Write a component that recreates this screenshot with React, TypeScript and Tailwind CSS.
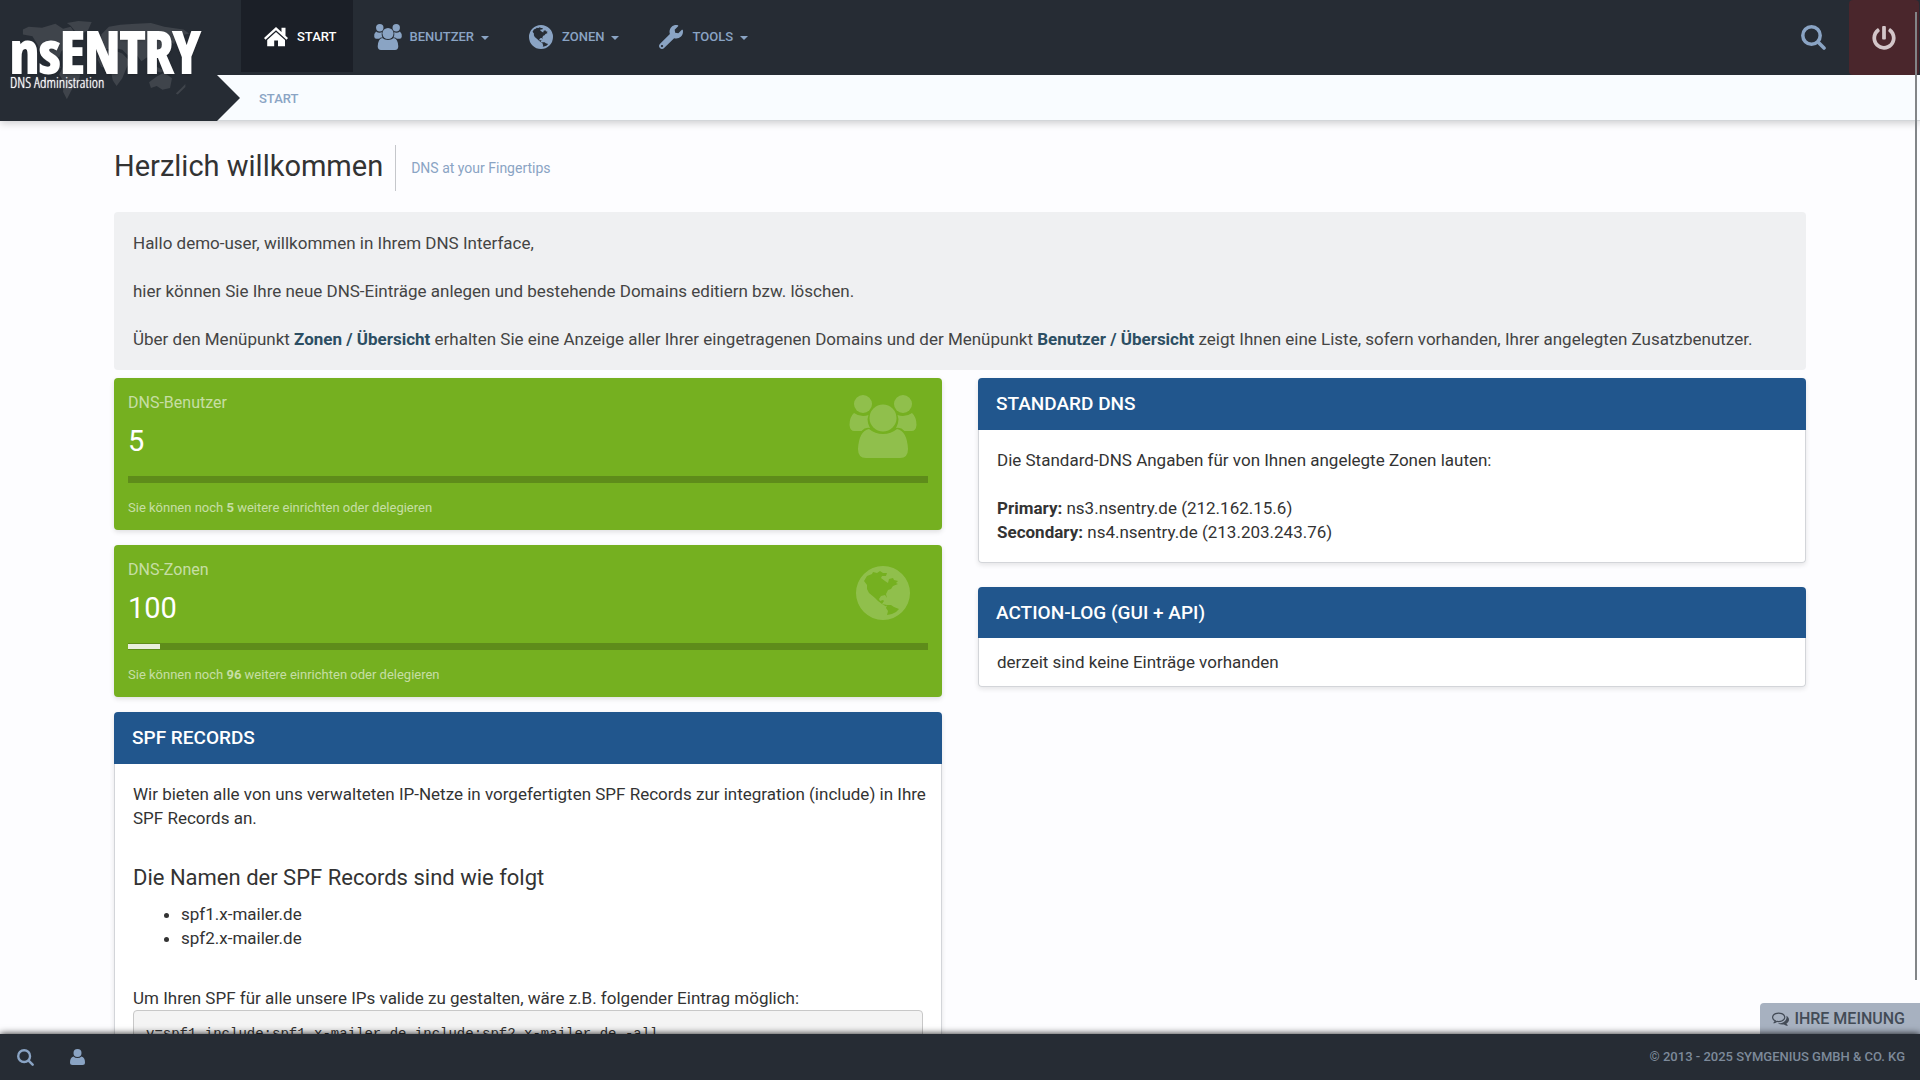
import React from 'react';
import { FaPowerOff, FaWrench } from 'react-icons/fa';

type IconProps = {
  className?: string;
};

type NavItem = {
  id: string;
  label: string;
  icon: React.ReactNode;
  active?: boolean;
};

function HomeIcon({ className }: IconProps) {
  return <svg viewBox="0 0 24 20" fill="currentColor" className={className} aria-hidden="true">
      <path d="M12 0L17.500 5V.8H21.500V8.700L24 11L22.500 12.700L12 3.200L1.500 12.700L0 11Z" />
      <path d="M12 5L21 13V19.300H14V13.500H10.200V19.300H3.200V13Z" />
    </svg>;
}

function SearchIcon({ className }: IconProps) {
  return <svg viewBox="0 0 25 25" fill="none" stroke="currentColor" strokeLinecap="round" className={className} aria-hidden="true">
      <circle cx="10.500" cy="10.500" r="8.700" strokeWidth="3.500" />
      <path d="M17.500 17.500L23 23" strokeWidth="3.600" />
    </svg>;
}

function GlobeIcon({ className }: IconProps) {
  return <svg viewBox="0 0 54 54" fill="currentColor" fillRule="evenodd" className={className} aria-hidden="true">
      <path d="M27 0A27 27 0 0 1 27 54A27 27 0 0 1 27 0ZM8 15L11 10L16 8L17 6L21 7L24 5L27 7L31 7L30 10L26 10L25 12L29 15L32 17L33 13L37 12L38 14L42 15L40 17L42 18L37 20L35 23L32 24L30 28L31 32L29 29L25 30L23 33L24 35L27 34L28 35L26 38L31 39L31 41L26 38L22 35L19 32L13 27L11 23L11 19ZM31 39L35 39L38 41L43 43L40 46L36 48L31 49L32 45L30 42Z" />
    </svg>;
}

function GroupIcon({ className }: IconProps) {
  return <svg viewBox="0 0 68 63" fill="currentColor" className={className} aria-hidden="true">
      <circle cx="14" cy="9" r="9" />
      <circle cx="54" cy="9" r="9" />
      <circle cx="34" cy="23" r="13.500" />
      <path d="M5 18Q9 21 14 21Q17 21 19.500 20Q18 23 19 28Q20 31 21 33Q16 32 12.500 36H5.500Q1 36 .5 30Q.5 22 5 18Z" />
      <path d="M63 18Q59 21 54 21Q51 21 48.500 20Q50 23 49 28Q48 31 47 33Q52 32 55.500 36H62.500Q67 36 67.500 30Q67.500 22 63 18Z" />
      <path d="M20 34Q26 39 34 39Q42 39 48 34Q58 36 59 54Q59 63 51 63H17Q9 63 9 54Q10 36 20 34Z" />
    </svg>;
}

function PersonIcon({ className }: IconProps) {
  return <svg viewBox="0 0 15 16" fill="currentColor" className={className} aria-hidden="true">
      <circle cx="7.500" cy="4" r="4" />
      <path d="M3.500 7.500Q5 9 7.500 9Q10 9 11.500 7.500Q15 8.500 15 13.500Q15 16 12.500 16H2.500Q0 16 0 13.500Q0 8.500 3.500 7.500Z" />
    </svg>;
}

function CommentsIcon({ className }: IconProps) {
  return <svg viewBox="0 0 1792 1792" fill="currentColor" className={className} aria-hidden="true">
      <path d="M704 384q-153 0-286 52t-211.500 141-78.500 191q0 82 53 158t149 132l97 56-35 84q34-20 62-39l44-31 53 10q78 14 153 14 153 0 286-52t211.500-141 78.500-191-78.500-191-211.500-141-286-52zm0-128q191 0 353.500 68.500t256.500 186.500 94 257-94 257-256.500 186.500-353.500 68.500q-86 0-176-16-124 88-278 128-36 9-86 16h-3q-11 0-20.500-8t-11.500-21q-1-3-1-6.500t.5-6.500 2-6l2.500-5 3.500-5.500 4-5 4.500-5 4-4.500q5-6 23-25t26-29.500 22.500-29 25-38.500 20.500-44q-124-72-195-177t-71-224q0-139 94-257t256.500-186.500 353.500-68.500zm822 1169q10 24 20.500 44t25 38.500 22.500 29 26 29.500 23 25q1 1 4 4.500t4.500 5 4 5 3.500 5.500l2.500 5t2 6 .5 6.500-1 6.500q-3 14-13 22t-22 7q-50-7-86-16-154-40-278-128-90 16-176 16-271 0-472-132 58 4 88 4 161 0 309-45t264-129q125-92 192-212t67-254q0-77-23-152 129 71 204 178t75 230q0 120-71 224.500t-195 176.500z" />
    </svg>;
}

// World map behind the logo
function WorldMap({ className }: IconProps) {
  return <svg viewBox="0 0 180 90" fill="#3f444b" className={className} aria-hidden="true">
      <path d="M2 9L8 6L22 7L36 3L44 8L52 6L56 12L50 14L56 20L50 26L42 32L40 38L34 36L30 40L36 46L42 48L40 51L32 47L24 40L20 34L18 26L12 16L2 14Z" />
      <path d="M48 2L60 0L74 1L70 10L62 14L56 10L52 5Z" />
      <path d="M44 48L54 50L62 56L60 64L54 70L50 78L48 82L44 74L45 64L40 56Z" />
      <path d="M84 14L92 6L104 4L120 3L136 2L150 6L170 9L176 13L164 16L160 24L154 20L150 30L142 36L138 44L132 38L126 42L120 34L112 36L106 30L98 28L88 30L84 24Z" />
      <path d="M84 32L96 30L106 34L114 42L110 50L106 60L100 68L96 62L94 52L84 48L80 40Z" />
      <path d="M134 64L142 58L150 54L158 60L156 70L148 72L142 68L136 70Z" />
      <path d="M134 46L142 48L150 52L146 54L136 51Z" />
      <path d="M168 70L172 66L172 69L164 77L162 76Z" />
    </svg>;
}

const navItems: NavItem[] = [{
  id: 'start',
  label: 'START',
  icon: <HomeIcon className="w-6 h-5" />,
  active: true
}, {
  id: 'benutzer',
  label: 'BENUTZER',
  icon: <GroupIcon className="w-7 h-7" />
}, {
  id: 'zonen',
  label: 'ZONEN',
  icon: <GlobeIcon className="w-6 h-6" />
}, {
  id: 'tools',
  label: 'TOOLS',
  icon: <FaWrench className="w-6 h-6" />
}];

function Header() {
  return <header className="relative z-20 flex h-[121px] shrink-0 shadow-[0_2px_8px_rgba(0,0,0,0.2)]">
      <div className="relative z-10 w-[217px] shrink-0 bg-[#262c34]">
        <WorldMap className="absolute left-[17px] top-[21px] w-[180px] h-[86px]" />
        <a href="#start" className="relative flex flex-col pl-[10px] pt-[27px] text-white">
          <span className="font-['Open_Sans_Condensed','Open_Sans',sans-serif] text-[57px] leading-[48px] font-extrabold [-webkit-text-stroke:2px_white] [text-shadow:0_1px_3px_rgba(0,0,0,0.5)]">nsENTRY</span>
          <span className="font-['Open_Sans_Condensed_Light','Open_Sans_Condensed','Open_Sans',sans-serif] text-[15px] leading-[14px] [text-shadow:0_0_1px_white]">DNS Administration</span>
        </a>
        <div className="absolute left-full bottom-0 w-[23px] h-[46px] bg-[#262c34] [clip-path:polygon(0_0,100%_50%,0_100%)]" />
      </div>
      <div className="flex-1 flex flex-col">
        <div className="h-[75px] flex items-start justify-between bg-[#262c34] text-[#8aa4c4]">
          <nav className="flex pl-6">
            {navItems.map(item => <button key={item.id} type="button" className={`h-[72px] pt-[2px] flex items-center gap-[7px] pl-[21px] pr-[17px] text-[13px] font-medium ${item.active ? 'bg-[#1b1f27] text-white' : ''}`}>
                <span className="w-7 flex justify-center">{item.icon}</span>
                {item.label}
                {!item.active && <span className="mt-[2px] border-x-4 border-t-4 border-x-transparent border-t-current" />}
              </button>)}
          </nav>
          <div className="flex h-full pr-px">
            <button type="button" aria-label="Suche" className="px-[23px]">
              <SearchIcon className="w-[25px] h-[25px]" />
            </button>
            <button type="button" aria-label="Abmelden" className="w-[70px] flex items-center justify-center rounded bg-[#4a262c] text-[#d3c6c9]">
              <FaPowerOff className="w-6 h-6" />
            </button>
          </div>
        </div>
        <div className="flex-1 flex items-center pl-[42px] pt-[2px] bg-[#f9fcff] border-b border-[#d3d6d9] text-[13px] font-medium text-[#8aa4c4]">
          <a href="#start">START</a>
        </div>
      </div>
    </header>;
}

type StatTileProps = {
  label: string;
  value: number;
  used: number;
  free: number;
  icon: React.ReactNode;
};

function StatTile({ label, value, used, free, icon }: StatTileProps) {
  return <section className="rounded bg-[#75b020] px-[14px] pt-[13px] pb-3 text-white shadow-[0_2px_5px_rgba(0,0,0,0.12)]">
      <div className="flex justify-between h-[70px]">
        <div>
          <h2 className="text-base leading-6 text-white/60">{label}</h2>
          <p className="mt-[7px] text-[29px] leading-[38px]">{value}</p>
        </div>
        <div className="w-[90px] flex items-center justify-center text-white/20">{icon}</div>
      </div>
      <div className="mt-[15px] h-[7px] py-px bg-[#5e8c1a]">
        <div className="h-[5px] bg-[#e8efdd]" style={{ width: `${used}%` }} />
      </div>
      <p className="mt-[15px] text-[13px] leading-5 text-white/60">
        Sie können noch <strong>{free}</strong> weitere einrichten oder delegieren
      </p>
    </section>;
}

type PanelProps = {
  title: string;
  compact?: boolean;
  children: React.ReactNode;
};

function Panel({ title, compact, children }: PanelProps) {
  return <section className="rounded shadow-[0_2px_5px_rgba(0,0,0,0.1)]">
      <h2 className={`px-[18px] flex items-center rounded-t bg-[#21568d] text-[19px] font-medium text-white ${compact ? 'h-[51px]' : 'h-[52px]'}`}>{title}</h2>
      <div className={`px-[18px] rounded-b border border-t-0 border-[#d3d5d9] bg-white ${compact ? 'py-3' : 'py-[18px]'}`}>
        {children}
      </div>
    </section>;
}

export default function App() {
  return <div className="relative h-screen flex flex-col overflow-hidden bg-[#fdfdff] font-[Roboto,sans-serif] text-[17px] leading-6 text-[#333]">
      <Header />
      <main className="flex-1 min-h-0 overflow-hidden px-[114px] pt-6">
        <div className="flex items-center">
          <h1 className="text-[29px] leading-[42px] pb-1 pr-3 border-r border-[#c5c7cb]">Herzlich willkommen</h1>
          <p className="pl-[15px] text-sm text-[#8aa4c4]">DNS at your Fingertips</p>
        </div>
        <div className="mt-[21px] p-[19px] rounded bg-[#eff0f2] text-[#444]">
          <p>Hallo demo-user, willkommen in Ihrem DNS Interface,</p>
          <p className="mt-6">hier können Sie Ihre neue DNS-Einträge anlegen und bestehende Domains editiern bzw. löschen.</p>
          <p className="mt-6">
            Über den Menüpunkt <a href="#zonen" className="font-bold text-[#2c4e63]">Zonen / Übersicht</a> erhalten Sie eine Anzeige aller Ihrer eingetragenen Domains und der Menüpunkt <a href="#benutzer" className="font-bold text-[#2c4e63]">Benutzer / Übersicht</a> zeigt Ihnen eine Liste, sofern vorhanden, Ihrer angelegten Zusatzbenutzer.
          </p>
        </div>
        <div className="mt-2 grid grid-cols-2 gap-9 items-start">
          <div className="flex flex-col gap-[15px]">
            <StatTile label="DNS-Benutzer" value={5} used={0} free={5} icon={<GroupIcon className="w-[68px] h-[63px]" />} />
            <StatTile label="DNS-Zonen" value={100} used={4} free={96} icon={<GlobeIcon className="w-[54px] h-[54px]" />} />
            <Panel title="SPF RECORDS">
              <p className="whitespace-nowrap">
                Wir bieten alle von uns verwalteten IP-Netze in vorgefertigten SPF Records zur integration (include) in Ihre
                <br />
                SPF Records an.
              </p>
              <h3 className="mt-9 text-[22px] leading-6">Die Namen der SPF Records sind wie folgt</h3>
              <ul className="mt-3 pl-12 list-disc">
                <li>spf1.x-mailer.de</li>
                <li>spf2.x-mailer.de</li>
              </ul>
              <p className="mt-9">Um Ihren SPF für alle unsere IPs valide zu gestalten, wäre z.B. folgender Eintrag möglich:</p>
              <pre className="px-3 py-[11px] rounded border border-[#c8c8c8] bg-[#f4f4f4] font-['Liberation_Mono',monospace] text-sm leading-6">v=spf1 include:spf1.x-mailer.de include:spf2.x-mailer.de -all</pre>
            </Panel>
          </div>
          <div className="flex flex-col gap-6">
            <Panel title="STANDARD DNS">
              <p>Die Standard-DNS Angaben für von Ihnen angelegte Zonen lauten:</p>
              <p className="mt-6"><strong>Primary:</strong> ns3.nsentry.de (212.162.15.6)</p>
              <p><strong>Secondary:</strong> ns4.nsentry.de (213.203.243.76)</p>
            </Panel>
            <Panel title="ACTION-LOG (GUI + API)" compact>
              <p>derzeit sind keine Einträge vorhanden</p>
            </Panel>
          </div>
        </div>
      </main>
      <button type="button" className="absolute right-0 bottom-[46px] h-[31px] pl-3 pr-[15px] flex items-center gap-[5px] rounded-tl bg-[#a7b1c0] text-base font-medium text-[#434b56]">
        <CommentsIcon className="w-[17px] h-[17px]" />
        IHRE MEINUNG
      </button>
      <footer className="relative h-[46px] shrink-0 flex items-center justify-between pl-[17px] pr-[15px] bg-[#262c34] text-[#8aa4c4] shadow-[0_0_7px_rgba(0,0,0,0.9)]">
        <div className="flex items-center gap-9">
          <button type="button" aria-label="Suche"><SearchIcon className="w-[17px] h-[17px]" /></button>
          <button type="button" aria-label="Benutzer"><PersonIcon className="w-[15px] h-4" /></button>
        </div>
        <p className="text-[13px] font-medium text-[#7d8a9a]">© 2013 - 2025 SYMGENIUS GMBH &amp; CO. KG</p>
      </footer>
      <div className="absolute right-[3px] top-3 bottom-[100px] z-30 w-[2px] bg-[#828588]" />
    </div>;
}
